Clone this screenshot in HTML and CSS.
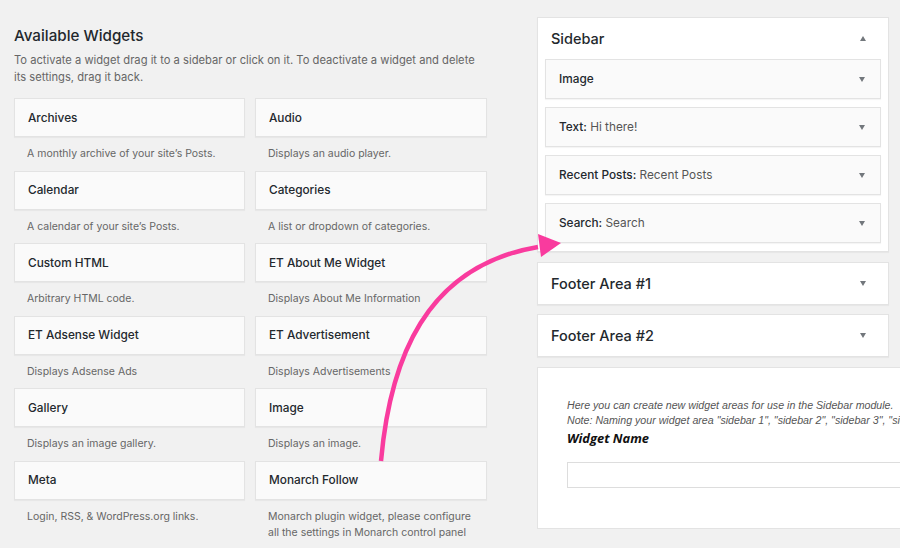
FILE: index.html
```html
<!DOCTYPE html>
<html lang="en">
<head>
    <meta charset="UTF-8">
    <title>Widgets</title>
    <link rel="stylesheet" href="styles.css">
</head>
<body>
    <div class="page">
        <div class="available">
            <h2>Available Widgets</h2>
            <p class="intro">To activate a widget drag it to a sidebar or click on it. To deactivate a widget and delete its settings, drag it back.</p>

            <div class="widget-grid">
                <div class="widget">
                    <div class="widget-title">Archives</div>
                    <div class="widget-desc">A monthly archive of your site’s Posts.</div>
                </div>
                <div class="widget">
                    <div class="widget-title">Audio</div>
                    <div class="widget-desc">Displays an audio player.</div>
                </div>
                <div class="widget">
                    <div class="widget-title">Calendar</div>
                    <div class="widget-desc">A calendar of your site’s Posts.</div>
                </div>
                <div class="widget">
                    <div class="widget-title">Categories</div>
                    <div class="widget-desc">A list or dropdown of categories.</div>
                </div>
                <div class="widget">
                    <div class="widget-title">Custom HTML</div>
                    <div class="widget-desc">Arbitrary HTML code.</div>
                </div>
                <div class="widget">
                    <div class="widget-title">ET About Me Widget</div>
                    <div class="widget-desc">Displays About Me Information</div>
                </div>
                <div class="widget">
                    <div class="widget-title">ET Adsense Widget</div>
                    <div class="widget-desc">Displays Adsense Ads</div>
                </div>
                <div class="widget">
                    <div class="widget-title">ET Advertisement</div>
                    <div class="widget-desc">Displays Advertisements</div>
                </div>
                <div class="widget">
                    <div class="widget-title">Gallery</div>
                    <div class="widget-desc">Displays an image gallery.</div>
                </div>
                <div class="widget">
                    <div class="widget-title">Image</div>
                    <div class="widget-desc">Displays an image.</div>
                </div>
                <div class="widget">
                    <div class="widget-title">Meta</div>
                    <div class="widget-desc">Login, RSS, &amp; WordPress.org links.</div>
                </div>
                <div class="widget">
                    <div class="widget-title">Monarch Follow</div>
                    <div class="widget-desc">Monarch plugin widget, please configure all the settings in Monarch control panel</div>
                </div>
            </div>
        </div>

        <div class="areas">
            <div class="area open">
                <div class="area-head">
                    <h3>Sidebar</h3>
                    <span class="toggle up"></span>
                </div>
                <div class="area-widgets">
                    <div class="placed"><span><b>Image</b></span><span class="toggle"></span></div>
                    <div class="placed"><span><b>Text:</b> Hi there!</span><span class="toggle"></span></div>
                    <div class="placed"><span><b>Recent Posts:</b> Recent Posts</span><span class="toggle"></span></div>
                    <div class="placed"><span><b>Search:</b> Search</span><span class="toggle"></span></div>
                </div>
            </div>

            <div class="area">
                <div class="area-head">
                    <h3>Footer Area #1</h3>
                    <span class="toggle"></span>
                </div>
            </div>

            <div class="area">
                <div class="area-head">
                    <h3>Footer Area #2</h3>
                    <span class="toggle"></span>
                </div>
            </div>

            <div class="create-area">
                <p class="create-note">Here you can create new widget areas for use in the Sidebar module.<br>Note: Naming your widget area "sidebar 1", "sidebar 2", "sidebar 3", "sidebar 4" or "sidebar 5" will cause conflicts with this theme</p>
                <label for="widgetName">Widget Name</label>
                <input type="text" id="widgetName">
            </div>
        </div>
    </div>

    <!-- drag hint -->
    <svg class="drag-arrow" width="900" height="548" viewBox="0 0 900 548">
        <path d="M381 461 C 390 360 425 266 538 247" fill="none" stroke="#f93b9e" stroke-width="4.5"/>
        <polygon points="538,234 561,243 541,257" fill="#f93b9e"/>
    </svg>
</body>
</html>
```

FILE: styles.css
```css
* {
    box-sizing: border-box;
}
body {
    margin: 0;
    background-color: #f1f1f1;
    font-family: Inter, "Noto Sans", sans-serif;
    color: #23282d;
    overflow: hidden;
    height: 548px;
    position: relative;
}
.page {
    display: flex;
    padding-left: 14px;
}
.available {
    width: 473px;
    flex-shrink: 0;
}
.available h2 {
    margin: 26px 0 0;
    font-size: 15.2px;
    font-weight: 500;
    line-height: 20px;
}
.intro {
    margin: 6px 0 12px;
    font-size: 11.2px;
    line-height: 17px;
    color: #666;
}
.widget-grid {
    display: grid;
    grid-template-columns: 231px 232px;
    column-gap: 10px;
}
.widget-title {
    height: 39px;
    display: flex;
    align-items: center;
    padding-left: 13px;
    background-color: #fafafa;
    border: 1px solid #e3e3e3;
    box-shadow: 0 1px 1px rgba(0,0,0,0.04);
    font-size: 11.8px;
    font-weight: 500;
}
.widget-desc {
    padding: 9px 4px 8.6px 13px;
    font-size: 10.5px;
    line-height: 16px;
    color: #666;
}
.areas {
    margin-left: 50px;
    padding-top: 17px;
    display: flex;
    flex-direction: column;
    gap: 9.5px;
}
.area {
    width: 352px;
    background-color: #fff;
    border: 1px solid #e3e3e3;
    box-shadow: 0 1px 1px rgba(0,0,0,0.04);
}
.area-head {
    height: 41px;
    display: flex;
    align-items: center;
    justify-content: space-between;
    padding: 0 22px 0 13px;
}
.area-head h3 {
    margin: 0;
    font-size: 14.5px;
    font-weight: 500;
}
.toggle {
    width: 0;
    height: 0;
    border-left: 3.5px solid transparent;
    border-right: 3.5px solid transparent;
    border-top: 5px solid #72777c;
}
.toggle.up {
    border-top: none;
    border-bottom: 5px solid #72777c;
}
.area-widgets {
    display: flex;
    flex-direction: column;
    gap: 8px;
    padding: 0 7px 8px 7px;
}
.placed {
    height: 40px;
    display: flex;
    align-items: center;
    justify-content: space-between;
    padding: 0 15px 0 13px;
    background-color: #fafafa;
    border: 1px solid #e3e3e3;
    box-shadow: 0 1px 1px rgba(0,0,0,0.04);
    font-size: 11.8px;
    color: #555;
}
.placed b {
    font-weight: 500;
    color: #23282d;
}
.create-area {
    width: 420px;
    height: 162px;
    background-color: #fff;
    border: 1px solid #e3e3e3;
    padding: 30px 0 0 29px;
}
.create-note {
    margin: 0;
    font-family: "Liberation Sans", Arial, sans-serif;
    font-style: italic;
    font-size: 10.65px;
    line-height: 15.5px;
    color: #555;
    white-space: nowrap;
}
.create-area label {
    display: block;
    font-family: "Open Sans", sans-serif;
    font-style: italic;
    font-weight: 700;
    font-size: 12.9px;
    line-height: 18px;
    color: #111;
}
.create-area input {
    display: block;
    margin-top: 15px;
    width: 380px;
    height: 26px;
    border: 1px solid #ddd;
    background: #fff;
}
.drag-arrow {
    position: absolute;
    left: 0;
    top: 0;
    pointer-events: none;
}
```
